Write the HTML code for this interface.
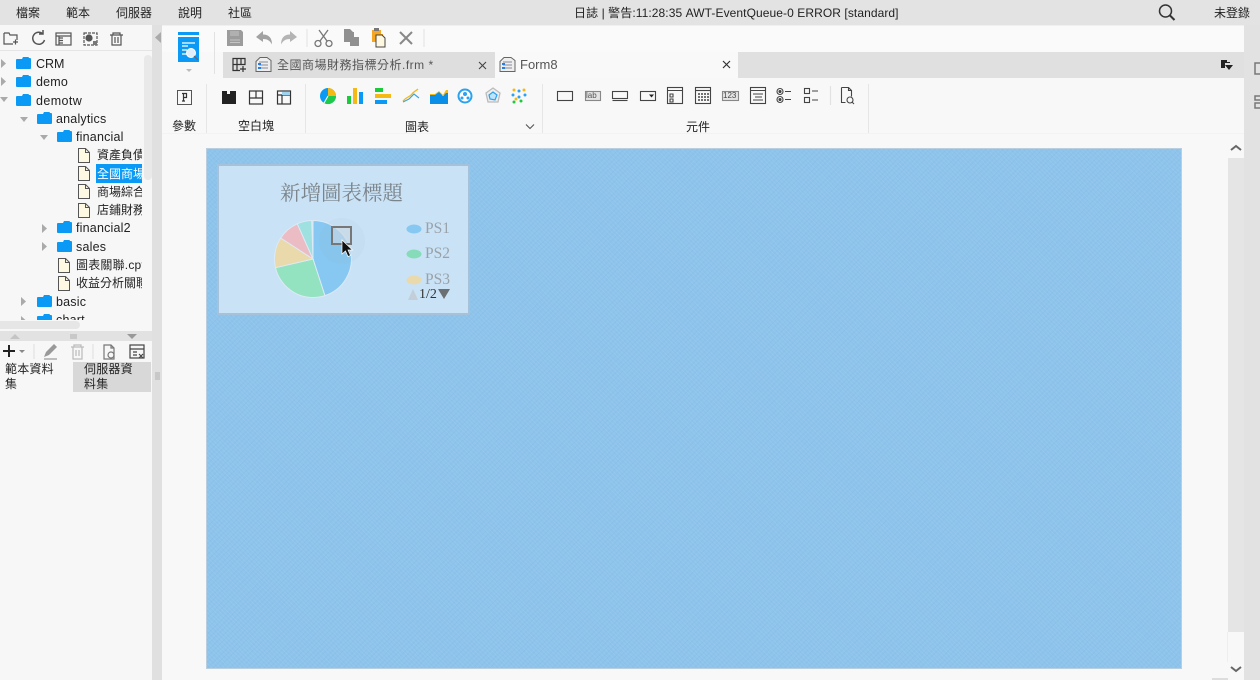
<!DOCTYPE html>
<html lang="zh-TW"><head><meta charset="utf-8"><title>FineReport</title>
<style>
html,body{margin:0;padding:0;width:1260px;height:680px;overflow:hidden;background:#f8f8f8}
body{font-family:"Liberation Sans","Noto Sans CJK TC",sans-serif;font-size:12px;color:#222;position:relative}
.a{position:absolute}
.t{position:absolute;white-space:nowrap;line-height:16px}
svg{position:absolute;overflow:visible}
.clip{overflow:hidden}
</style></head><body>

<!-- backgrounds -->
<div class="a" style="left:0;top:0;width:1260px;height:25px;background:#e3e3e3"></div>
<div class="a" style="left:0;top:25px;width:152px;height:655px;background:#f7f7f7"></div>
<div class="a" style="left:152px;top:25px;width:10px;height:655px;background:#e0e0e0"></div>
<div class="a" style="left:162px;top:25px;width:1082px;height:27px;background:#fafafa"></div>
<div class="a" style="left:1244px;top:25px;width:16px;height:655px;background:#e2e2e2"></div>
<div class="a" style="left:223px;top:52px;width:1021px;height:26px;background:#e0e0e0"></div>
<div class="a" style="left:495px;top:52px;width:243px;height:26px;background:#f9f9f9"></div>
<div class="a" style="left:223px;top:52px;width:272px;height:26px;background:#dedede"></div>
<div class="a" style="left:162px;top:133px;width:1082px;height:1px;background:#f3f3f3"></div>

<!-- menu -->
<div class="t" style="left:16px;top:5px">檔案</div>
<div class="t" style="left:66px;top:5px">範本</div>
<div class="t" style="left:116px;top:5px">伺服器</div>
<div class="t" style="left:178px;top:5px">說明</div>
<div class="t" style="left:228px;top:5px">社區</div>
<div class="t" style="left:574px;top:5px;letter-spacing:.08px">日誌 | 警告:11:28:35 AWT-EventQueue-0 ERROR [standard]</div>
<div class="t" style="left:1214px;top:5px">未登錄</div>
<svg style="left:1158px;top:4px" width="18" height="18" fill="none" stroke="#333" stroke-width="1.5"><circle cx="7.5" cy="7" r="6"/><path d="M12 11.500l4.500 4.500" stroke-width="2"/></svg>

<!-- left toolbar -->
<svg style="left:0;top:25px" width="152" height="26" fill="none" stroke="#555" stroke-width="1.2">
<path d="M4 8h5l1 2h7v5M4 8v11h9M13 17h5M15.500 14.500v5" />
<path d="M43 9a6 6 0 1 0 1.500 6M43 5v4h-4" stroke-width="1.500"/>
<rect x="56" y="8" width="15" height="12"/><path d="M56 11h15M59 13h4M59 15.500h4M59 18h4M59 11v9" />
<rect x="84" y="8" width="13" height="12" stroke-dasharray="3 1"/><circle cx="89" cy="13" r="3" fill="#555"/><rect x="93" y="16" width="4" height="4" fill="#777" stroke="none"/>
<path d="M110 10h13M113 10V8h7v2M112 10v10h9V10M115 12v6M118 12v6"/>
</svg>
<div class="a" style="left:0;top:50px;width:152px;height:1px;background:#e5e5e5"></div>

<!-- tree -->
<div class="a clip" style="left:0;top:52px;width:142px;height:268px">
<svg style="left:0;top:0" width="152" height="280">
<defs><g id="f"><path d="M0 3a1 1 0 0 1 1-1h5l1-2h5a1 1 0 0 1 1 1h1a1 1 0 0 1 1 1v9a1 1 0 0 1-1 1H1a1 1 0 0 1-1-1z" fill="#0a9af5"/></g>
<g id="d"><path d="M.5.5h7l4 4v10H.5z" fill="#fdf9e3" stroke="#555"/><path d="M7.500.5v4h4" fill="none" stroke="#555"/></g>
<path id="r" d="M0 0l5 4.500-5 4.500z" fill="#aaa"/><path id="o" d="M0 0h8l-4 5z" fill="#aaa"/></defs>
<use href="#r" x="1" y="7"/><use href="#f" x="16" y="5"/>
<use href="#r" x="1" y="25"/><use href="#f" x="16" y="23"/>
<use href="#o" x="0" y="45"/><use href="#f" x="16" y="42"/>
<use href="#o" x="20" y="65"/><use href="#f" x="37" y="60"/>
<use href="#o" x="40" y="83"/><use href="#f" x="57" y="78"/>
<use href="#d" x="78" y="96"/><use href="#d" x="78" y="114"/><use href="#d" x="78" y="132"/><use href="#d" x="78" y="151"/>
<use href="#r" x="42" y="172"/><use href="#f" x="57" y="169"/>
<use href="#r" x="42" y="190"/><use href="#f" x="57" y="188"/>
<use href="#d" x="58" y="206"/><use href="#d" x="58" y="224"/>
<use href="#r" x="21" y="245"/><use href="#f" x="37" y="243"/>
<use href="#r" x="21" y="264"/><use href="#f" x="37" y="262"/>
</svg>
<div class="a" style="left:96px;top:112px;width:46px;height:19px;background:#0a9af5"></div>
<div style="font-size:12.500px;letter-spacing:.2px">
<div class="t" style="left:36px;top:4px;letter-spacing:0">CRM</div>
<div class="t" style="left:36px;top:22px">demo</div>
<div class="t" style="left:36px;top:41px;letter-spacing:.4px">demotw</div>
<div class="t" style="left:56px;top:59px">analytics</div>
<div class="t" style="left:76px;top:77px">financial</div>
<div class="t" style="left:97px;top:95px;font-size:12px;letter-spacing:0">資產負債表</div>
<div class="t" style="left:97px;top:114px;font-size:12px;letter-spacing:0;color:#fff">全國商場財務</div>
<div class="t" style="left:97px;top:132px;font-size:12px;letter-spacing:0">商場綜合</div>
<div class="t" style="left:97px;top:150px;font-size:12px;letter-spacing:0">店鋪財務</div>
<div class="t" style="left:76px;top:168px">financial2</div>
<div class="t" style="left:76px;top:187px">sales</div>
<div class="t" style="left:76px;top:205px;font-size:12px">圖表關聯.cpt</div>
<div class="t" style="left:76px;top:223px;font-size:12px;letter-spacing:0">收益分析關聯</div>
<div class="t" style="left:56px;top:242px">basic</div>
<div class="t" style="left:56px;top:260px">chart</div>
</div>
</div>
<div class="a" style="left:144px;top:55px;width:8px;height:125px;background:#e9e9e9;border-radius:4px"></div>
<div class="a" style="left:0;top:321px;width:80px;height:8px;background:#e6e6e6;border-radius:0 4px 4px 0"></div>
<div class="a" style="left:0;top:331px;width:152px;height:10px;background:#e2e2e2"></div>
<svg style="left:0;top:331px" width="152" height="10"><path d="M10 8l5-5 5 5z" fill="#c4c4c4"/><rect x="70" y="3" width="7" height="5" fill="#c8c8c8"/><path d="M127 3h10l-5 5z" fill="#999"/></svg>
<!-- second toolbar -->
<svg style="left:0;top:341px" width="152" height="22" fill="none" stroke="#999" stroke-width="1.200">
<path d="M3 10h12M9 4v12" stroke="#222" stroke-width="2"/><path d="M19 9h6l-3 3z" fill="#888" stroke="none"/>
<path d="M34 3v15M93 3v15" stroke="#e3e3e3"/>
<path d="M44 16l2-5 8-8 3 3-8 8z" fill="#999" stroke="none"/><path d="M44 18h13"/>
<path d="M71 6h13M74 6V4h7v2M73 6v12h9V6M76 9v6M79 9v6" stroke="#bbb"/>
<path d="M104 4h7l3 3v11h-10zM111 4v3h3" stroke="#777"/><circle cx="111" cy="14" r="3" stroke="#777"/>
<rect x="130" y="4" width="14" height="13" stroke="#444"/><path d="M130 8h14M133 11h4M133 14h4" stroke="#444"/><path d="M139 13l4 4M143 13l-4 4" stroke="#444"/>
</svg>
<!-- bottom tabs -->
<div class="a" style="left:73px;top:362px;width:78px;height:30px;background:#d8d8d8"></div>
<div class="t" style="left:5px;top:362px;line-height:15px;letter-spacing:.2px">範本資料<br>集</div>
<div class="t" style="left:84px;top:362px;line-height:15px;letter-spacing:.2px">伺服器資<br>料集</div>
<div class="a" style="left:155px;top:372px;width:5px;height:8px;background:#c8c8c8"></div>
<svg style="left:154px;top:32px" width="8" height="12"><path d="M7 0v11L1 5.500z" fill="#aaa"/></svg>

<!-- main toolbar -->
<div class="a" style="left:162px;top:25px;width:1082px;height:1px;background:#f0f0f0"></div>
<svg style="left:178px;top:32px" width="24" height="44">
<rect x="0" y="0" width="21" height="3" fill="#0a9af5"/>
<path d="M0 5h21v25H0z" fill="#0a9af5"/>
<path d="M4 11h13M4 14h6M4 18h5M4 22h5" stroke="#fff" stroke-width="1.200"/>
<circle cx="13" cy="21" r="4.500" fill="#dfeef8" stroke="#fff"/><path d="M16 24l4 4" stroke="#667" stroke-width="1.500"/>
<path d="M8 37h6l-3 3z" fill="#bbb"/></svg>
<div class="a" style="left:214px;top:32px;width:1px;height:42px;background:#e2e2e2"></div>
<svg style="left:226px;top:27px" width="200" height="22">
<path d="M1 3h14l2 2v14H1z" fill="#9c9c9c"/><path d="M4 13h10M4 15.500h10" stroke="#c4c4c4"/><rect x="4" y="4" width="9" height="5" fill="#b0b0b0"/>
<path d="M30 10l7-6v3.500c6 0 9 3.500 9 10-2-4-5-5.500-9-5.500V15z" fill="#a2a2a2"/>
<path d="M71 10l-7-6v3.500c-6 0-9 3.500-9 10 2-4 5-5.500 9-5.500V15z" fill="#b4b4b4"/>
<path d="M81 2v18" stroke="#e2e2e2"/>
<g fill="none" stroke="#777" stroke-width="1.300"><circle cx="92" cy="16.500" r="3"/><circle cx="103" cy="16.500" r="3"/><path d="M94 14l8-11M101 14l-8-11"/></g>
<path d="M118 2h6l3 3h1v5h5v9h-9v-4h-6z" fill="#909090"/>
<path d="M146 3h9v4l2 0v8h-11z" fill="#f5a623"/><rect x="148" y="1" width="5" height="3" fill="#777"/><path d="M150 8h6l3 3v9h-9z" fill="#fff8e0" stroke="#444"/>
<path d="M174 5l12 12M186 5l-12 12" stroke="#888" stroke-width="2"/>
<path d="M198 2v18" stroke="#e2e2e2"/>
</svg>
<!-- tabs -->
<svg style="left:232px;top:57px" width="16" height="16" fill="none" stroke="#333" stroke-width="1.200"><path d="M1 1.500h12v6H1zM1 1.500v12h7M5 1.500v12M9 1.500v6M1 7.500h8M11 9v6M8 12h6"/></svg>
<svg style="left:255px;top:57px" width="17" height="16" fill="#eee" stroke="#666"><path d="M5 .5h7l4 3v11H1v-10z"/><path d="M4 5h9M4 8h9M4 11h9" stroke="#889"/><rect x="3" y="6" width="3" height="2" fill="#2a7de1" stroke="none"/><rect x="3" y="10" width="3" height="2" fill="#2a7de1" stroke="none"/></svg>
<div class="t" style="left:277px;top:57px;color:#555;letter-spacing:.5px">全國商場財務指標分析.frm *</div>
<svg style="left:478px;top:61px" width="10" height="10" stroke="#444" stroke-width="1.100"><path d="M1 1l7 7M8 1l-7 7"/></svg>
<svg style="left:499px;top:57px" width="17" height="16" fill="#eee" stroke="#666"><path d="M5 .5h7l4 3v11H1v-10z"/><path d="M4 5h9M4 8h9M4 11h9" stroke="#889"/><rect x="3" y="6" width="3" height="2" fill="#2a7de1" stroke="none"/><rect x="3" y="10" width="3" height="2" fill="#2a7de1" stroke="none"/></svg>
<div class="t" style="left:520px;top:57px;color:#555;font-size:13px">Form8</div>
<svg style="left:722px;top:60px" width="10" height="10" stroke="#333" stroke-width="1.200"><path d="M1 1l7 7M8 1l-7 7"/></svg>
<svg style="left:1220px;top:59px" width="14" height="13"><path d="M1 1h6v2h3v1H5v5H1z" fill="#222"/><path d="M5 6h8l-4 5z" fill="#222"/></svg>

<!-- ribbon -->
<div class="a" style="left:206px;top:84px;width:1px;height:49px;background:#e6e6e6"></div>
<div class="a" style="left:305px;top:84px;width:1px;height:49px;background:#e6e6e6"></div>
<div class="a" style="left:542px;top:84px;width:1px;height:49px;background:#e6e6e6"></div>
<div class="a" style="left:868px;top:84px;width:1px;height:49px;background:#e6e6e6"></div>
<svg style="left:177px;top:90px" width="15" height="15" fill="none" stroke="#555"><rect x=".5" y=".5" width="14" height="14"/><path d="M5 3.500h4.500v4H6.500M6.500 3.500v7.500M5 11h3" stroke="#333" stroke-width="1.200"/></svg>
<svg style="left:221px;top:90px" width="72" height="15" fill="none" stroke="#333" stroke-width="1.200">
<path d="M1 1h5v3h3V1h6v13H1z" fill="#222" stroke="none"/>
<rect x="28.500" y="1" width="13" height="13"/><path d="M28.500 8h13M35 1v7"/>
<rect x="56.500" y="1" width="13" height="13"/><path d="M56.500 5h13M61 5v9"/><rect x="61" y="1.500" width="8" height="3.500" fill="#9fd4f0" stroke="none"/>
</svg>
<!-- chart icons -->
<svg style="left:319px;top:87px" width="210" height="18">
<circle cx="9" cy="9" r="8" fill="#0a9af5"/><path d="M9 9V1a8 8 0 0 1 8 8z" fill="#f5b916"/><path d="M9 9h8a8 8 0 0 1-12 7z" fill="#1fc94b"/><path d="M9 9L5 16" stroke="#fff"/>
<rect x="28" y="9" width="4" height="8" fill="#1ccb3c"/><rect x="34" y="1" width="4" height="16" fill="#f5b916"/><rect x="40" y="5" width="4" height="12" fill="#0a9af5"/>
<rect x="56" y="1" width="8" height="4" fill="#1ccb3c"/><rect x="56" y="7" width="16" height="4" fill="#f5b916"/><rect x="56" y="13" width="12" height="4" fill="#0a9af5"/>
<path d="M84 14c4-5 6-3 9-7 2-3 4-3 6-5" stroke="#f5b916" fill="none" stroke-width="1.300"/><path d="M84 15l6-3 5-5 5 4" stroke="#3aa4e8" fill="none" stroke-width="1.200"/>
<path d="M111 7l5 0 4-3 4 4 3-5 2 0v5h-18z" fill="#f5b916"/><path d="M111 8l5 0 4-3 4 4 3-3 2 0v11h-18z" fill="#0a8ee8"/>
<circle cx="146" cy="9" r="6.500" fill="#fff" stroke="#2aa2ef" stroke-width="2"/><circle cx="143" cy="11" r="1.500" fill="#2aa2ef"/><circle cx="149" cy="11" r="1.500" fill="#2aa2ef"/><circle cx="146" cy="7" r="2" fill="#2aa2ef"/>
<path d="M174 1l7 5-2 9h-10l-2-9z" fill="#eee" stroke="#bbb" stroke-width="1.300"/><path d="M174 5l4 3-2 5-5-1-1-4z" fill="#bfe3f8" stroke="#2aa2ef" stroke-width="1.200"/>
<g><circle cx="195" cy="3" r="1.500" fill="#f5b916"/><circle cx="200" cy="4" r="1.500" fill="#2aa2ef"/><circle cx="205" cy="3" r="1.500" fill="#f5b916"/><circle cx="194" cy="8" r="1.500" fill="#2aa2ef"/><circle cx="200" cy="10" r="1.500" fill="#2aa2ef"/><circle cx="206" cy="8" r="1.500" fill="#2aa2ef"/><circle cx="197" cy="12" r="1.500" fill="#f5b916"/><circle cx="195" cy="15" r="1.500" fill="#1ccb3c"/><circle cx="202" cy="14" r="1.500" fill="#1ccb3c"/></g>
</svg>
<svg style="left:525px;top:124px" width="10" height="6" fill="none" stroke="#555" stroke-width="1.100"><path d="M1 .5l4 4 4-4"/></svg>
<!-- widget icons -->
<svg style="left:555px;top:86px" width="300" height="20" fill="none" stroke="#444" stroke-width="1.100">
<rect x="2.500" y="5.500" width="15" height="9"/>
<rect x="30.500" y="5.500" width="15" height="9" stroke="#888" fill="#e4e4e4"/>
<rect x="57.500" y="5.500" width="15" height="7"/><path d="M57.500 14.500h15"/>
<rect x="85.500" y="5.500" width="15" height="9"/><path d="M94 8.500h5l-2.500 3z" fill="#222" stroke="none"/>
<rect x="112.500" y="1.500" width="15" height="16"/><path d="M112.500 4.500h15M115 8h3v3h-3zM115 13h3v3h-3z"/>
<rect x="140.500" y="1.500" width="15" height="16"/><path d="M140.500 4.500h15"/><path d="M143 8h11M143 11h11M143 14h11" stroke-dasharray="2 1" stroke-width="1.500"/>
<rect x="167.500" y="5.500" width="16" height="9" stroke="#888" fill="#e4e4e4"/>
<rect x="195.500" y="1.500" width="15" height="16"/><path d="M195.500 4.500h15M198 8h10M200 11h7M198 14h10"/>
<circle cx="225" cy="5.500" r="3"/><circle cx="225" cy="13.500" r="3"/><circle cx="225" cy="5.500" r="1" fill="#444"/><circle cx="225" cy="13.500" r="1" fill="#444"/><path d="M230 5.500h6M230 13.500h6"/>
<rect x="249.500" y="2.500" width="5" height="5"/><rect x="249.500" y="11.500" width="5" height="5"/><path d="M257 5h6M257 14h6"/>
<path d="M275.500 0v19" stroke="#e2e2e2"/>
<path d="M286.500 1.500h7l3 3v6M286.500 1.500v15h4M293.500 1.500v3h3"/><circle cx="295" cy="14" r="3"/><path d="M297 16l2 2"/>
</svg>
<div class="t" style="left:172px;top:118px">參數</div>
<div class="t" style="left:238px;top:118px">空白塊</div>
<div class="t" style="left:405px;top:119px">圖表</div>
<div class="t" style="left:686px;top:119px">元件</div>
<div class="t" style="left:586px;top:91px;font-size:8px;color:#555;line-height:10px">lab</div>
<div class="t" style="left:723px;top:91px;font-size:8px;color:#444;line-height:10px">123</div>

<!-- canvas -->
<div class="a" style="left:206px;top:148px;width:976px;height:521px;background:#8ec4eb;border:1px solid #b9cfe0;box-sizing:border-box;background-image:repeating-linear-gradient(45deg,rgba(255,255,255,.05) 0 1px,transparent 1px 3px),repeating-linear-gradient(-45deg,rgba(0,60,120,.03) 0 1px,transparent 1px 4px)"></div>
<div class="a" style="left:217px;top:164px;width:253px;height:151px;box-sizing:border-box;border:2px solid #a6c2da;background:#c9e2f6"></div>
<div class="t" style="left:280px;top:181px;font:20.500px/26px 'Liberation Serif','Noto Serif CJK SC',serif;color:#7c848b">新增圖表標題</div>
<svg style="left:260px;top:210px" width="110" height="100">
<g stroke="#ddeaf5" stroke-width="1" transform="translate(53 49)">
<path d="M0 0V-38.500A38.500 38.500 0 0 1 11.900 36.600z" fill="#86c8f2"/>
<path d="M0 0L11.900 36.600A38.500 38.500 0 0 1-37.500 8.700z" fill="#93e2c0"/>
<path d="M0 0L-37.500 8.700A38.500 38.500 0 0 1-32.300-21z" fill="#ead9ab"/>
<path d="M0 0L-32.300-21A38.500 38.500 0 0 1-15.700-35.200z" fill="#ebbcc3"/>
<path d="M0 0L-15.700-35.200A38.500 38.500 0 0 1-1.300-38.500z" fill="#9fe0e0"/>
</g>
<circle cx="82" cy="31" r="23" fill="#9aa9b5" opacity=".07"/>
<rect x="72" y="17" width="19" height="17" fill="#ccd9e4" fill-opacity=".6" stroke="#777" stroke-width="2"/>
<path d="M82 30v14l3.500-3 2.500 5.500 2.500-1-2.500-5.500h4.500z" fill="#111" stroke="#fff" stroke-width=".7"/>
</svg>
<svg style="left:405px;top:222px" width="50" height="80">
<ellipse cx="9" cy="7" rx="7.500" ry="4.500" fill="#86c8f2"/>
<ellipse cx="9" cy="32" rx="7.500" ry="4.500" fill="#86dcb8"/>
<ellipse cx="9" cy="58" rx="7.500" ry="4.500" fill="#ead9ab"/>
<path d="M3 78l5-11 5 11z" fill="#c3ced8"/>
<path d="M33 67h12l-6 10z" fill="#6c6f72"/>
</svg>
<div class="t" style="left:425px;top:220px;font:15.500px/18px 'Liberation Serif',serif;color:#9aa2a9">PS1</div>
<div class="t" style="left:425px;top:245px;font:15.500px/18px 'Liberation Serif',serif;color:#9aa2a9">PS2</div>
<div class="t" style="left:425px;top:271px;font:15.500px/18px 'Liberation Serif',serif;color:#9aa2a9">PS3</div>
<div class="t" style="left:419px;top:287px;font:14px/16px 'Liberation Serif',serif;color:#333">1/2</div>

<!-- right scrollbar -->
<div class="a" style="left:1228px;top:158px;width:16px;height:474px;background:#e5e5e5"></div>
<div class="a" style="left:1227px;top:632px;width:1px;height:30px;background:#eee"></div>
<svg style="left:1230px;top:144px" width="12" height="8" fill="none" stroke="#666" stroke-width="2"><path d="M1 6l5-4 5 4"/></svg>
<svg style="left:1230px;top:665px" width="12" height="8" fill="none" stroke="#666" stroke-width="2"><path d="M1 2l5 4 5-4"/></svg>
<div class="a" style="left:1212px;top:678px;width:16px;height:2px;background:#ddd"></div>
<svg style="left:1254px;top:60px" width="6" height="50" fill="none" stroke="#777" stroke-width="1.500"><path d="M6 3H1v11h5M6 36H1v4h5M6 43H1v5h5"/></svg>
</body></html>
